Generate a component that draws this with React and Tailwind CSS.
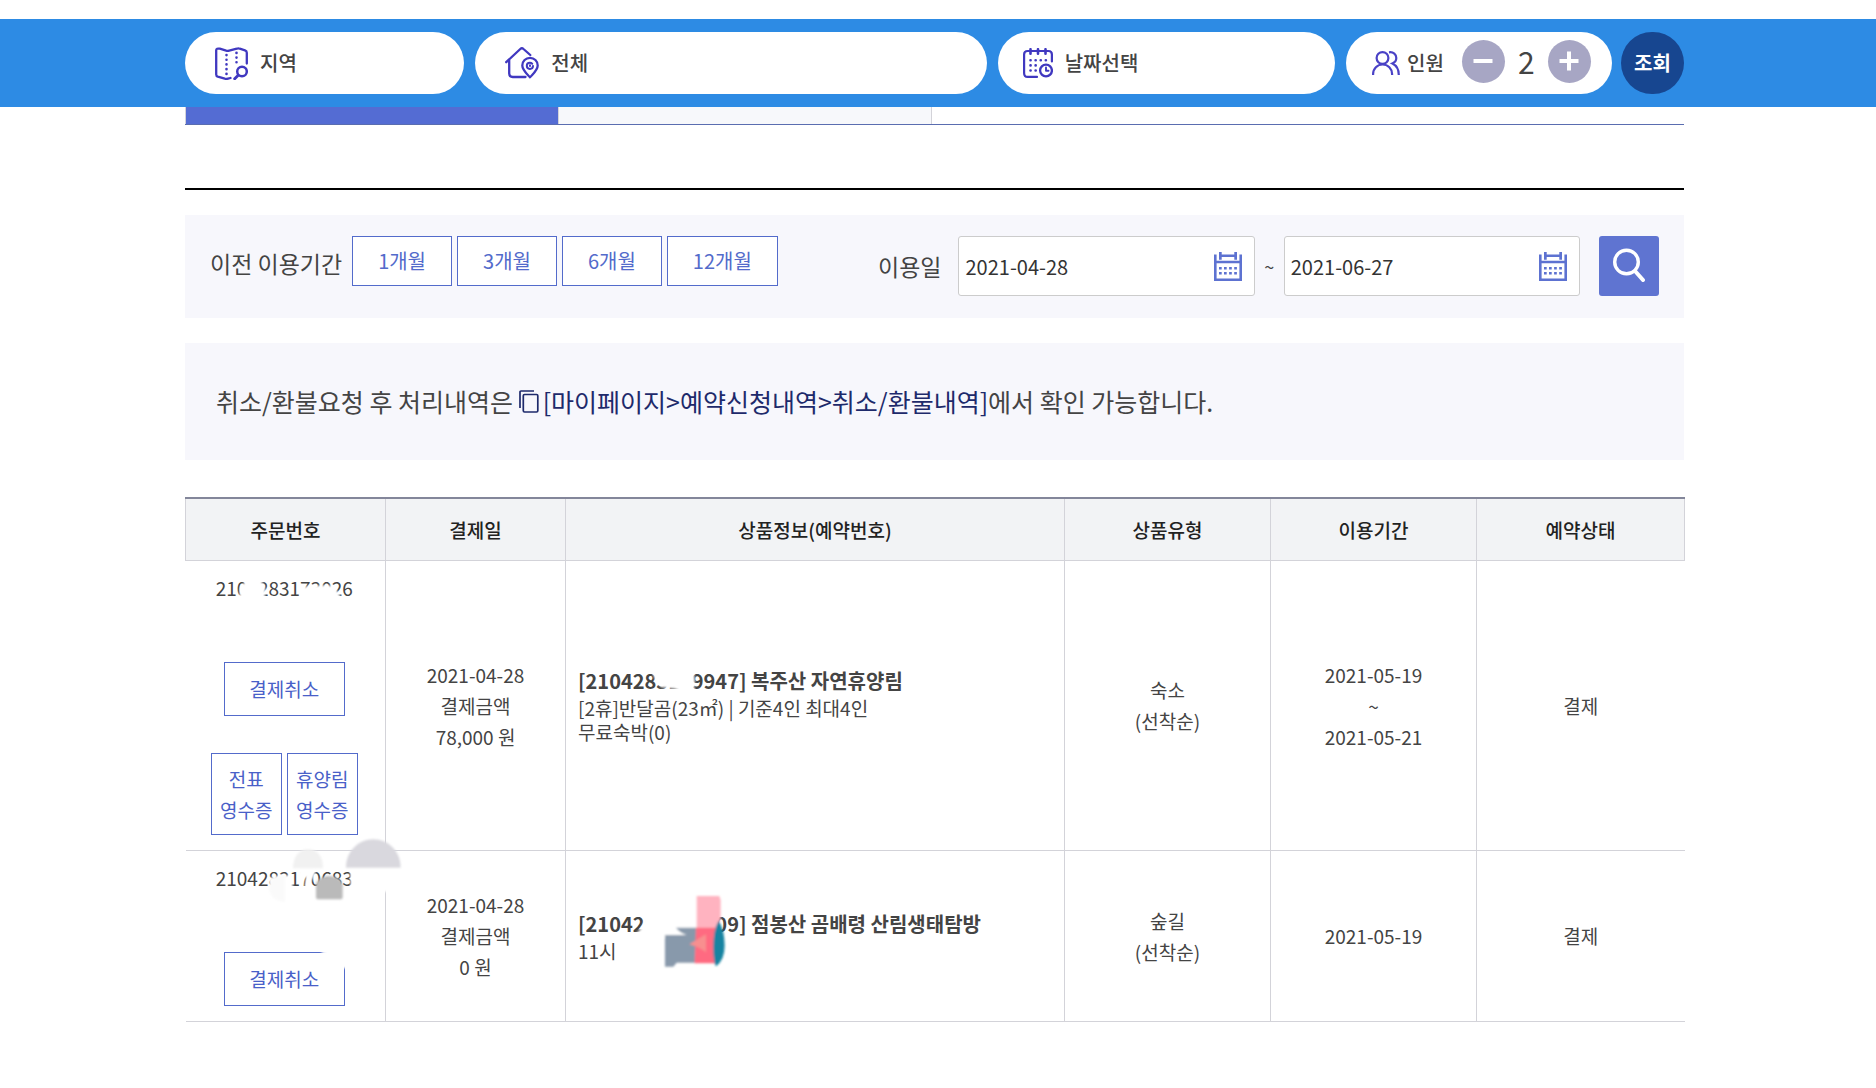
import React, { useState } from 'react';

const MapIcon = () => (
  <svg className="w-[33px] h-[33px] shrink-0" viewBox="0 0 33 33" fill="none" stroke="#4038c0" strokeWidth="2.300" strokeLinecap="round" strokeLinejoin="round" aria-hidden="true">
    <path d="M31.800 16.500V5.800q0-1.800-1.800-2.400l-5.200-1.700q-1.500-.6-3 0l-7.600 2q-1.600.4-3 0l-6.400-2Q1.200 1 1.200 3.200v24.300q0 1.700 1.600 2.200l7 2q1.700.4 3.200 0l2.500-.7" />
    <path d="M11.500 8v20M21.500 5.800v11.400" strokeWidth="2.600" strokeDasharray="0.100 4.600" />
    <circle cx="27" cy="24.500" r="4.800" strokeWidth="2.500" />
    <path d="M23.200 28.200l-3.500 3.500" strokeWidth="2.900" />
  </svg>
);

const HouseIcon = () => (
  <svg className="w-[34px] h-[33px] shrink-0" viewBox="0 0 34 33" fill="none" stroke="#4038c0" strokeWidth="2.300" strokeLinecap="round" strokeLinejoin="round" aria-hidden="true">
    <path d="M1.200 15.200L15.300 2q1.600-1.500 3.200 0l6.800 6M4.200 13v13.500q0 3.500 3.500 3.500H20.500" />
    <path d="M25 30.300c-3.500-4-7.700-7.300-7.700-11.800a7.700 7.700 0 0 1 15.400 0c0 4.500-4.200 7.800-7.700 11.800z" />
    <path d="M28 19a3.100 3.100 0 1 1-3.200-3.300 3.100 3.100 0 0 1 2.400 1M25 18.300v.8" strokeWidth="2" />
  </svg>
);

const CalendarClockIcon = () => (
  <svg className="w-[30px] h-[30px] shrink-0" viewBox="0 0 30 30" fill="none" stroke="#4038c0" strokeWidth="2.200" strokeLinecap="round" strokeLinejoin="round" aria-hidden="true">
    <path d="M28.900 13.500V6.500q0-3.500-3.500-3.500H4.600Q1.100 3 1.100 6.500v18.400q0 4 3.500 4H14" />
    <path d="M7.500 1.200v4.600M15 1.200v4.600M22.500 1.200v4.600" strokeWidth="2.600" />
    <path d="M7.500 12.200H23M7.500 17.400h6M7.500 22.500h6" strokeWidth="2.600" strokeDasharray="0.100 5" />
    <circle cx="23" cy="22.500" r="5.900" strokeWidth="2.300" />
    <path d="M23 19.500v3.300h2.500" strokeWidth="1.900" />
  </svg>
);

const PeopleIcon = () => (
  <svg className="w-7 h-6 shrink-0" viewBox="0 0 28 24" fill="none" stroke="#4a42c6" strokeWidth="2.200" aria-hidden="true">
    <circle cx="10.500" cy="7" r="5.900" />
    <path d="M1.100 24v-1a9.500 9.500 0 0 1 19 0v1" />
    <path d="M17 1.300c4.500-.6 7.300 2.200 7.300 5.700 0 2.700-1.700 4.500-3.900 5.400 4.200 2 6.400 5.600 6.400 11.600" />
  </svg>
);

const CalendarIcon = () => (
  <svg className="w-7 h-[29px]" viewBox="0 0 28 29" fill="#5d72d1" aria-hidden="true">
    <path fillRule="evenodd" d="M0 2.500h2.600v6.200h22.800V2.500H28V29H0zM2.600 11.200v15.200h22.800V11.200z" />
    <path d="M5 0h2.700v7.700H5zM20.300 0H23v7.700h-2.700zM7.700 2.500h12.600V5H7.700z" />
    <path d="M5 15h2.700v2.600H5zM10 15h2.700v2.600H10zM15.100 15h2.700v2.600h-2.700zM20.200 15h2.700v2.600h-2.700zM5 20h2.700v2.600H5zM10 20h2.700v2.600H10zM15.100 20h2.700v2.600h-2.700zM20.200 20h2.700v2.600h-2.700z" />
  </svg>
);

const CopyIcon = () => (
  <svg className="inline-block w-5 h-[23px] mr-1 align-[-1px]" viewBox="0 0 20 23" fill="none" stroke="#1e2a6b" strokeWidth="1.700" aria-hidden="true">
    <rect x="4.300" y="4.500" width="14.500" height="17.500" rx="1.200" />
    <path d="M1 18V2q0-1 1-1h13" />
  </svg>
);

const DateField = ({ id, label, value, onChange }) => (
  <div className="flex flex-1 items-center h-[60px] bg-white border border-[#ccc] rounded-[3px] pl-1.5 pr-3">
    <input
      id={id}
      type="text"
      aria-label={label}
      className="flex-1 min-w-0 h-full text-xl text-[#333] bg-transparent outline-none"
      value={value}
      onChange={(e) => onChange(e.target.value)}
    />
    <button type="button" aria-label={`${label} 선택`} className="cursor-pointer">
      <CalendarIcon />
    </button>
  </div>
);

// Paint spots lying over parts of the reservation numbers
const Spots = () => (
  <svg className="absolute left-0 top-0 pointer-events-none" width="800" height="525" viewBox="0 0 800 525" aria-hidden="true">
    <defs>
      <filter id="soft" x="-20%" y="-20%" width="140%" height="140%">
        <feGaussianBlur stdDeviation="2.500" />
      </filter>
    </defs>
    <g transform="translate(-15 53) scale(0.3333)" filter="url(#soft)" fill="#fff">
      <path d="M208 150l2-36q6-12 20-22 14-8 36-4 18 12 20 30l-2 32z" />
      <path d="M386 150l10-36q16-8 38-7 28-2 54 0 18 14 26 43z" />
    </g>
    <g transform="translate(-15 323) scale(0.3333)" filter="url(#soft)">
      <path d="M296 176q20-12 68-10l6 44h-70z" fill="#fff" />
      <path d="M386 140h54l-6 24-20 38h-10l4-32-22 4z" fill="#fff" />
      <path d="M540 140h165v75H542z" fill="#fff" />
      <path d="M528 143c0-50 38-85 82-85s82 35 82 85z" fill="#d9d8de" />
      <path d="M369 145c0-34 18-57 45-57s45 20 45 57z" fill="#f1f1f1" />
      <path d="M345 165v80c-28 0-48-18-48-42 0-22 16-38 48-38z" fill="#fafafa" />
      <path d="M438 190q12-22 40-22 28 0 40 24v38q0 8-8 8h-64q-8 0-8-8z" fill="#bababa" />
      <path d="M455 385h90v60h-26q-22-34-64-46z" fill="#fff" />
    </g>
    <g transform="translate(365 153) scale(0.3333)" filter="url(#soft)">
      <path d="M306 60h122q12 30 2 66h-34l-22-10-40-4q-22-20-28-52z" fill="#fff" />
      <path d="M282 795l60-55h160l-4 60q-16 20-10 70l-190-10-40-10q24-18 24-34z" fill="#fff" />
      <path d="M440 738h68l4 12v58l-14 30h-58z" fill="#ffb3c0" />
      <path d="M378 833h62v105h-60l-10 12h-25v-95h65q-20-6-32-22z" fill="#8899ab" />
      <path d="M438 833h62v107h-66z" fill="#ff6b81" />
      <path d="M418 883l50-30v54q-20-16-50-24z" fill="#f88f8f" />
      <path d="M506 813q18 28 18 74 0 42-26 62-8-12-8-60 0-50 16-76z" fill="#1683a1" />
    </g>
  </svg>
);

const periods = ['1개월', '3개월', '6개월', '12개월'];

const headers = [
  { name: '주문번호', col: 'w-[200px]' },
  { name: '결제일', col: 'w-[180px]' },
  { name: '상품정보(예약번호)', col: 'w-[499px]' },
  { name: '상품유형', col: 'w-[206px]' },
  { name: '이용기간', col: 'w-[206px]' },
  { name: '예약상태', col: 'w-[208px]' },
];

const reservations = [
  {
    orderNo: '2104283173026',
    paid: ['2021-04-28', '결제금액', '78,000 원'],
    title: '[2104283189947] 복주산 자연휴양림',
    details: ['[2휴]반달곰(23㎡) | 기준4인 최대4인', '무료숙박(0)'],
    type: ['숙소', '(선착순)'],
    period: ['2021-05-19', '~', '2021-05-21'],
    status: '결제',
    receipts: [['전표', '영수증'], ['휴양림', '영수증']],
  },
  {
    orderNo: '2104283170683',
    paid: ['2021-04-28', '결제금액', '0 원'],
    title: '[2104283170609] 점봉산 곰배령 산림생태탐방',
    details: ['11시'],
    type: ['숲길', '(선착순)'],
    period: ['2021-05-19'],
    status: '결제',
    receipts: [],
  },
];

const Lines = ({ items }) => items.map((line) => <div key={line}>{line}</div>);

const App = () => {
  const [people, setPeople] = useState(2);
  const [from, setFrom] = useState('2021-04-28');
  const [to, setTo] = useState('2021-06-27');

  return (
    <div className="font-['Noto_Sans_CJK_KR',sans-serif] text-[#444] bg-white pt-[19px]">
      <header className="bg-[#2d8be4] pr-[7px]">
        <div className="max-w-[1499px] mx-auto py-[13px] grid grid-cols-[279fr_511fr_337fr_338px] gap-[11px] text-xl font-medium">
          <button type="button" className="flex items-center gap-3 h-[62px] pl-[30px] bg-white rounded-full cursor-pointer">
            <MapIcon />
            지역
          </button>
          <button type="button" className="flex items-center gap-3 h-[62px] pl-[30px] bg-white rounded-full cursor-pointer">
            <HouseIcon />
            전체
          </button>
          <button type="button" className="flex items-center gap-3 h-[62px] pl-[25px] bg-white rounded-full cursor-pointer">
            <CalendarClockIcon />
            날짜선택
          </button>
          <div className="flex justify-between">
            <div className="flex items-center w-[266px] h-[62px] pl-[26px] pr-[21px] bg-white rounded-full">
              <PeopleIcon />
              <span className="ml-[7px]">인원</span>
              <div className="flex flex-1 items-center justify-between pb-1 ml-[18px]">
                <button
                  type="button"
                  aria-label="인원 감소"
                  onClick={() => setPeople(Math.max(1, people - 1))}
                  className="flex items-center justify-center w-[43px] h-[43px] rounded-full bg-[#a7a6c4] cursor-pointer"
                >
                  <svg className="w-5 h-5" viewBox="0 0 20 20" stroke="#fff" strokeWidth="4"><path d="M0.500 10h19" /></svg>
                </button>
                <span className="text-[30px] leading-[43px] font-normal">{people}</span>
                <button
                  type="button"
                  aria-label="인원 증가"
                  onClick={() => setPeople(people + 1)}
                  className="flex items-center justify-center w-[43px] h-[43px] rounded-full bg-[#a7a6c4] cursor-pointer"
                >
                  <svg className="w-5 h-5" viewBox="0 0 20 20" stroke="#fff" strokeWidth="4"><path d="M0.500 10h19M10 0.500v19" /></svg>
                </button>
              </div>
            </div>
            <button type="button" className="w-[63px] h-[62px] rounded-full bg-[#174690] text-white font-bold cursor-pointer">조회</button>
          </div>
        </div>
      </header>

      <main className="pr-[7px] pb-[66px]">
        <div className="max-w-[1499px] mx-auto">
          <div className="grid grid-cols-[373fr_374fr_752fr] h-[18px] border-b border-[#5a6db0]">
            <div className="bg-[#546cd3] border-l border-[#d3d3d9]"></div>
            <div className="bg-[#f7f8fb] border-x border-[#d3d3d9]"></div>
          </div>

          <section className="mt-[63px] border-t-2 border-black pt-[25px]">
            <div className="flex justify-between bg-[#f7f7fc] h-[103px] pt-[21px] px-[25px]">
              <div className="flex items-start">
                <span className="text-[23px] leading-[54px] mr-[10px]">이전 이용기간</span>
                <div className="flex gap-[5px]">
                  {periods.map((period) => (
                    <button
                      key={period}
                      type="button"
                      className="h-[50px] px-[25px] bg-white border border-[#536bcb] text-xl text-[#536bcb] cursor-pointer"
                    >
                      {period}
                    </button>
                  ))}
                </div>
              </div>
              <div className="flex w-[781px]">
                <label htmlFor="from" className="text-[23px] leading-[60px] mr-[17px]">이용일</label>
                <DateField id="from" label="시작일" value={from} onChange={setFrom} />
                <span className="w-[29px] text-center text-lg leading-[60px]">~</span>
                <DateField id="to" label="종료일" value={to} onChange={setTo} />
                <button type="button" aria-label="검색" className="flex items-center justify-center w-[60px] h-[60px] ml-[19px] rounded-[3px] bg-[#5f74d1] cursor-pointer">
                  <svg className="w-8 h-[34px] -mt-0.5" viewBox="0 0 32 34" fill="none" stroke="#fff" strokeWidth="3.400" strokeLinecap="round">
                    <circle cx="13.500" cy="14" r="11.800" />
                    <path d="M22 23l8 9" strokeWidth="4" />
                  </svg>
                </button>
              </div>
            </div>

            <p className="mt-[25px] px-[31px] py-10 bg-[#f7f7fc] text-[25px] leading-[37px]">
              취소/환불요청 후 처리내역은{' '}
              <a href="#cancel" className="text-[#1e2a6b]"><CopyIcon />[마이페이지&gt;예약신청내역&gt;취소/환불내역]</a>
              에서 확인 가능합니다.
            </p>
          </section>

          <div className="relative mt-[37px]">
            <table className="w-full table-fixed border-collapse text-[19px] leading-[31px] text-center">
              <thead>
                <tr className="h-[62px] bg-[#f2f3f5] border-t-2 border-[#83869a]">
                  {headers.map((header) => (
                    <th key={header.name} className={`${header.col} border-x border-b border-[#d3d3d9] font-medium text-[#222]`}>
                      {header.name}
                    </th>
                  ))}
                </tr>
              </thead>
              <tbody>
                {reservations.map((item) => (
                  <tr key={item.orderNo} className="border-b border-[#d3d3d9]">
                    <td className="border-r border-[#d3d3d9] pt-[11px] pb-[15px] pr-0.5">
                      <div>{item.orderNo}</div>
                      <button type="button" className="mt-[59px] block mx-auto w-[121px] h-[54px] border border-[#536bcb] text-[#4960c8] cursor-pointer">
                        결제취소
                      </button>
                      {item.receipts.length > 0 && (
                        <div className="flex justify-center gap-[5px] mt-[37px]">
                          {item.receipts.map((receipt) => (
                            <button key={receipt[0]} type="button" className="w-[71px] h-[82px] border border-[#536bcb] text-[#4960c8] cursor-pointer">
                              <Lines items={receipt} />
                            </button>
                          ))}
                        </div>
                      )}
                    </td>
                    <td className="border-r border-[#d3d3d9]"><Lines items={item.paid} /></td>
                    <td className="border-r border-[#d3d3d9] pl-3 text-left leading-6">
                      <strong className="block text-xl leading-[30px]">{item.title}</strong>
                      <Lines items={item.details} />
                    </td>
                    <td className="border-r border-[#d3d3d9]"><Lines items={item.type} /></td>
                    <td className="border-r border-[#d3d3d9]"><Lines items={item.period} /></td>
                    <td>{item.status}</td>
                  </tr>
                ))}
              </tbody>
            </table>
            <Spots />
          </div>
        </div>
      </main>
    </div>
  );
};

export default App;
